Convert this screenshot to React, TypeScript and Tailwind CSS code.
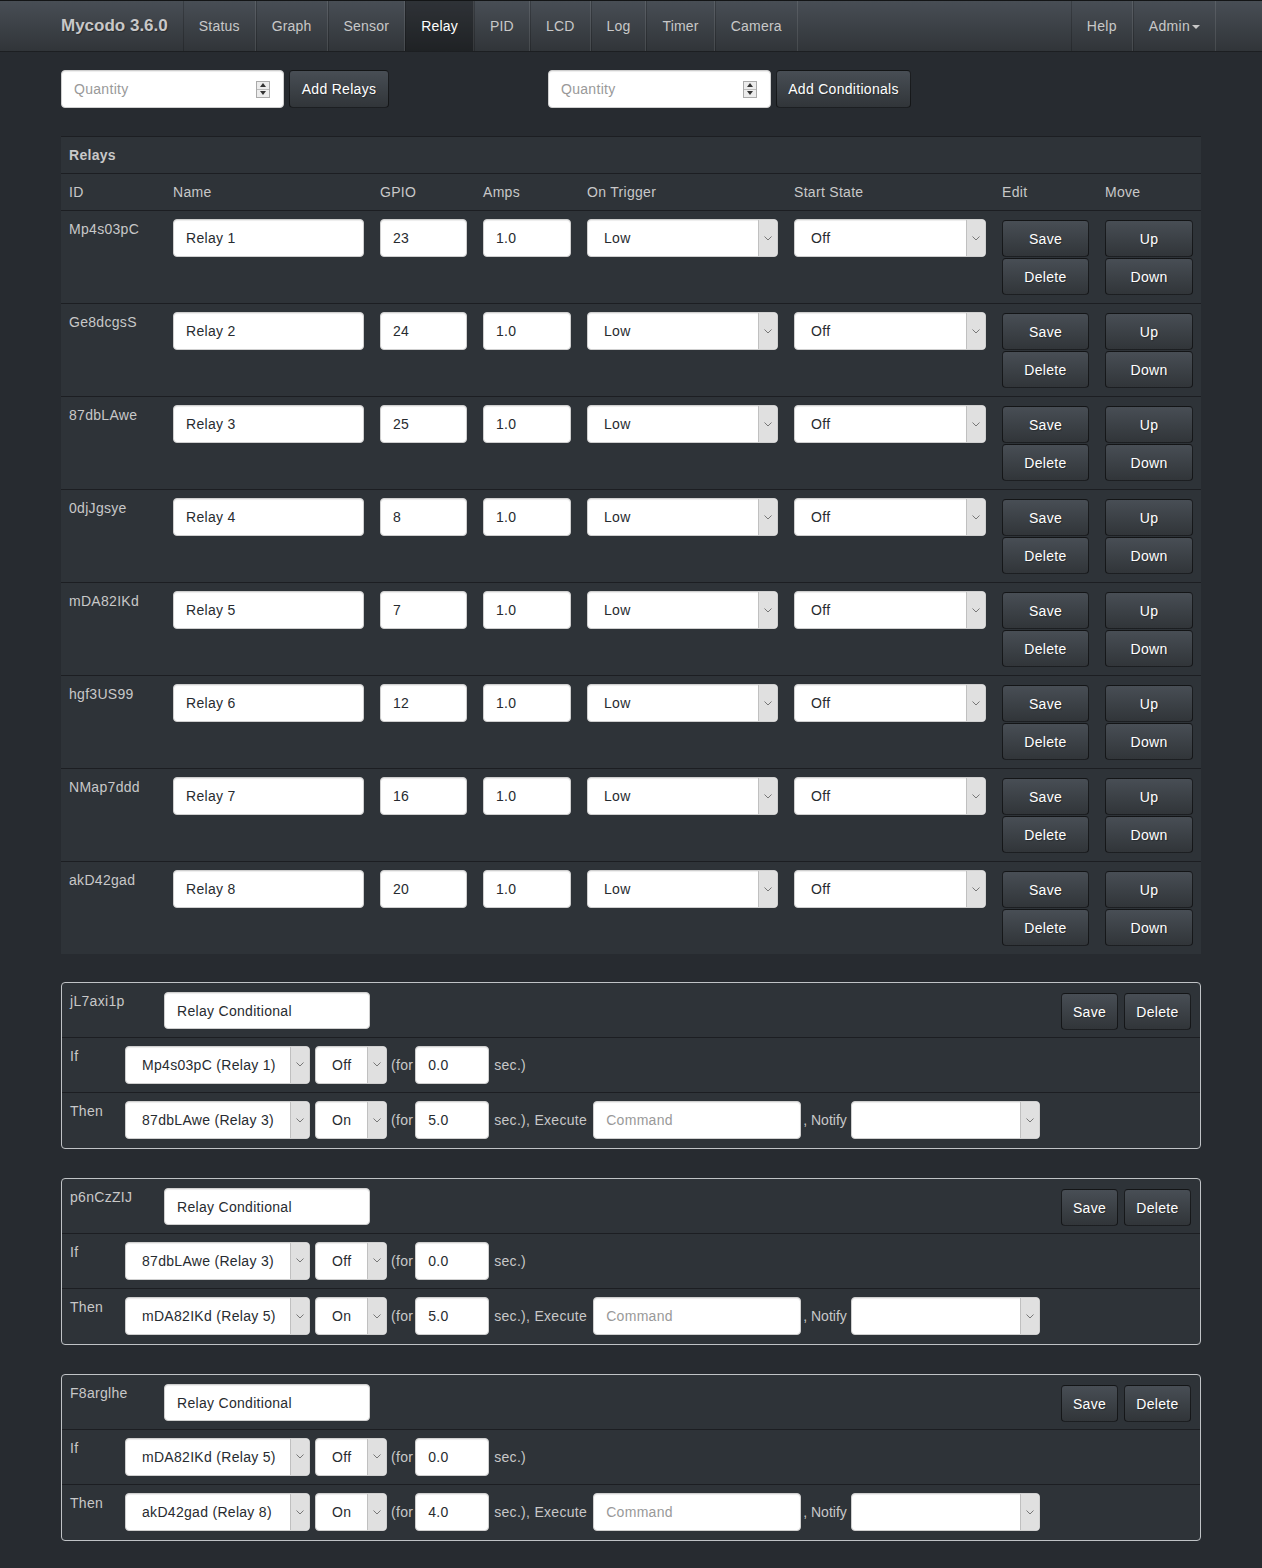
import React from 'react';

const RELAYS = [
  { id: 'Mp4s03pC', name: 'Relay 1', gpio: '23' },
  { id: 'Ge8dcgsS', name: 'Relay 2', gpio: '24' },
  { id: '87dbLAwe', name: 'Relay 3', gpio: '25' },
  { id: '0djJgsye', name: 'Relay 4', gpio: '8' },
  { id: 'mDA82IKd', name: 'Relay 5', gpio: '7' },
  { id: 'hgf3US99', name: 'Relay 6', gpio: '12' },
  { id: 'NMap7ddd', name: 'Relay 7', gpio: '16' },
  { id: 'akD42gad', name: 'Relay 8', gpio: '20' },
];

const CONDITIONALS = [
  { id: 'jL7axi1p', ifRelay: 'Mp4s03pC (Relay 1)', ifFor: '0.0', thenRelay: '87dbLAwe (Relay 3)', thenFor: '5.0' },
  { id: 'p6nCzZIJ', ifRelay: '87dbLAwe (Relay 3)', ifFor: '0.0', thenRelay: 'mDA82IKd (Relay 5)', thenFor: '5.0' },
  { id: 'F8arglhe', ifRelay: 'mDA82IKd (Relay 5)', ifFor: '0.0', thenRelay: 'akD42gad (Relay 8)', thenFor: '4.0' },
];

const NAV = ['Status', 'Graph', 'Sensor', 'Relay', 'PID', 'LCD', 'Log', 'Timer', 'Camera'];

const btn =
  'bg-linear-to-b from-[#484e55] via-[#3a3f44] via-60% to-[#313539] border border-black/60 rounded-[4px] text-white text-[14px] [text-shadow:1px_1px_1px_rgba(0,0,0,0.3)] flex items-center justify-center';

const field =
  'bg-white border border-[#cfcfcf] rounded-[4px] text-[14px] text-[#272b30] shadow-[inset_0_1px_1px_rgba(0,0,0,0.075)] outline-none';

const Input: React.FC<{ value?: string; placeholder?: string; className?: string }> = ({ value, placeholder, className }) => (
  <input
    type="text"
    defaultValue={value}
    placeholder={placeholder}
    className={`${field} px-3 placeholder-[#999] ${className ?? ''}`}
  />
);

const Select: React.FC<{ value?: string; className?: string }> = ({ value, className }) => (
  <div className={`${field} flex overflow-hidden ${className ?? ''}`}>
    <span className="flex-1 flex items-center pl-4 whitespace-nowrap">{value}</span>
    <span className="w-[19px] bg-[#e0e0e0] border-l border-[#c0c0c0] flex items-center justify-center">
      <svg width="8" height="5" viewBox="0 0 8 5">
        <path d="M0.5 0.5 L4 4 L7.5 0.5" fill="none" stroke="#777" strokeWidth="1" />
      </svg>
    </span>
  </div>
);

const Quantity: React.FC = () => (
  <div className={`${field} w-[223px] h-[38px] flex items-center pl-3 pr-[13px]`}>
    <span className="flex-1 text-[#999]">Quantity</span>
    <span className="w-[14px] h-[17px] flex flex-col border border-[#aaa] bg-[#ececec]">
      <span className="flex-1 flex items-center justify-center border-b border-[#bbb]">
        <svg width="6" height="4" viewBox="0 0 6 4"><path d="M0 4 L3 0 L6 4Z" fill="#333" /></svg>
      </span>
      <span className="flex-1 flex items-center justify-center">
        <svg width="6" height="4" viewBox="0 0 6 4"><path d="M0 0 L3 4 L6 0Z" fill="#333" /></svg>
      </span>
    </span>
  </div>
);

const Navbar: React.FC = () => (
  <div className="h-[52px] bg-linear-to-b from-[#484e55] via-[#3a3f44] via-60% to-[#313539] border-y border-black/60">
    <div className="w-[1170px] mx-auto px-[15px] flex h-full">
      <div className="-ml-[15px] px-[15px] flex items-center text-[17px] tracking-normal font-bold text-[#c8c8c8] [text-shadow:1px_1px_1px_rgba(0,0,0,0.3)]">
        Mycodo 3.6.0
      </div>
      <div className="flex tracking-[0.2px]">
        {NAV.map(n => (
          <div
            key={n}
            className={`px-[15px] flex items-center border-l border-black/20 border-r border-r-white/10 text-[14px] ${
              n === 'Relay' ? 'bg-black/35 text-white' : 'text-[#c8c8c8]'
            }`}
          >
            {n}
          </div>
        ))}
      </div>
      <div className="flex ml-auto -mr-[15px]">
        <div className="px-[15px] flex items-center border-l border-black/20 border-r border-r-white/10 text-[14px] text-[#c8c8c8]">Help</div>
        <div className="px-[15px] flex items-center border-l border-black/20 border-r border-r-white/10 text-[14px] text-[#c8c8c8]">
          Admin
          <svg width="8" height="4" viewBox="0 0 8 4" className="ml-[2px] mt-[2px]"><path d="M0 0 L4 4 L8 0Z" fill="#c8c8c8" /></svg>
        </div>
      </div>
    </div>
  </div>
);

const COLS = 'grid grid-cols-[104px_207px_103px_104px_207px_208px_103px_104px]';

const RelayTable: React.FC = () => (
  <div className="bg-[#2e3338] border-t border-[#1c1e22] mt-[28px]">
    <div className="p-2 leading-5 font-bold text-[14px]">Relays</div>
    <div className={`${COLS} border-t border-[#1c1e22] leading-5`}>
      {['ID', 'Name', 'GPIO', 'Amps', 'On Trigger', 'Start State', 'Edit', 'Move'].map(h => (
        <div key={h} className="p-2">{h}</div>
      ))}
    </div>
    {RELAYS.map(r => (
      <div key={r.id} className={`${COLS} border-t border-[#1c1e22] leading-5`}>
        <div className="p-2">{r.id}</div>
        <div className="px-2 pt-2"><Input value={r.name} className="w-full h-[38px]" /></div>
        <div className="px-2 pt-2"><Input value={r.gpio} className="w-full h-[38px]" /></div>
        <div className="px-2 pt-2"><Input value="1.0" className="w-full h-[38px]" /></div>
        <div className="px-2 pt-2"><Select value="Low" className="w-full h-[38px]" /></div>
        <div className="px-2 pt-2"><Select value="Off" className="w-full h-[38px]" /></div>
        <div className="px-2 pt-[9px] pb-2 flex flex-col gap-px">
          <button className={`${btn} h-[37px]`}>Save</button>
          <button className={`${btn} h-[37px]`}>Delete</button>
        </div>
        <div className="px-2 pt-[9px] pb-2 flex flex-col gap-px">
          <button className={`${btn} h-[37px]`}>Up</button>
          <button className={`${btn} h-[37px]`}>Down</button>
        </div>
      </div>
    ))}
  </div>
);

type Cond = (typeof CONDITIONALS)[number];

const Conditional: React.FC<{ c: Cond; first: boolean }> = ({ c, first }) => (
  <div className={`${first ? 'mt-[28px]' : 'mt-[29px]'} border border-[#c0c3c6] rounded-[4px] bg-[#2e3338] leading-5`}>
    <div className="flex h-[55px] border-b border-[#1c1e22]">
      <div className="w-[102px] p-2">{c.id}</div>
      <div className="pt-[9px]"><Input value="Relay Conditional" className="w-[206px] h-[37px]" /></div>
      <div className="ml-auto flex gap-[6px] pt-[10px] pr-[9px]">
        <button className={`${btn} w-[57px] h-[37px]`}>Save</button>
        <button className={`${btn} w-[67px] h-[37px]`}>Delete</button>
      </div>
    </div>
    <div className="flex h-[55px] border-b border-[#1c1e22]">
      <div className="w-[55px] p-2">If</div>
      <div className="flex items-center pl-2 pt-[8px] pb-[9px]">
        <Select value={c.ifRelay} className="w-[185px] h-[38px]" />
        <Select value="Off" className="w-[72px] h-[38px] ml-[5px]" />
        <span className="ml-[4px]">(for</span>
        <Input value={c.ifFor} className="w-[74px] h-[38px] ml-[2px]" />
        <span className="ml-[5px]">sec.)</span>
      </div>
    </div>
    <div className="flex h-[55px]">
      <div className="w-[55px] p-2">Then</div>
      <div className="flex items-center pl-2 pt-[8px] pb-[9px]">
        <Select value={c.thenRelay} className="w-[185px] h-[38px]" />
        <Select value="On" className="w-[72px] h-[38px] ml-[5px]" />
        <span className="ml-[4px]">(for</span>
        <Input value={c.thenFor} className="w-[74px] h-[38px] ml-[2px]" />
        <span className="ml-[5px] w-[95px] whitespace-nowrap">sec.), Execute</span>
        <Input placeholder="Command" className="w-[208px] h-[38px] ml-[4px]" />
        <span className="ml-[2px] w-[46px] whitespace-nowrap tracking-normal">, Notify</span>
        <Select value="" className="w-[189px] h-[38px] ml-[2px]" />
      </div>
    </div>
  </div>
);

export default function App() {
  return (
    <div className="min-h-[1568px] bg-[#272b30] text-[#c8c8c8] text-[14px] tracking-[0.3px] font-['Liberation_Sans',Arial,sans-serif]">
      <Navbar />
      <div className="w-[1140px] mx-auto pb-[30px]">
        <div className="flex mt-[18px]">
          <div className="flex gap-[5px] w-[487px]">
            <Quantity />
            <button className={`${btn} w-[100px] h-[38px]`}>Add Relays</button>
          </div>
          <div className="flex gap-[5px]">
            <Quantity />
            <button className={`${btn} w-[135px] h-[38px]`}>Add Conditionals</button>
          </div>
        </div>
        <RelayTable />
        {CONDITIONALS.map((c, i) => (
          <Conditional key={c.id} c={c} first={i === 0} />
        ))}
      </div>
    </div>
  );
}
